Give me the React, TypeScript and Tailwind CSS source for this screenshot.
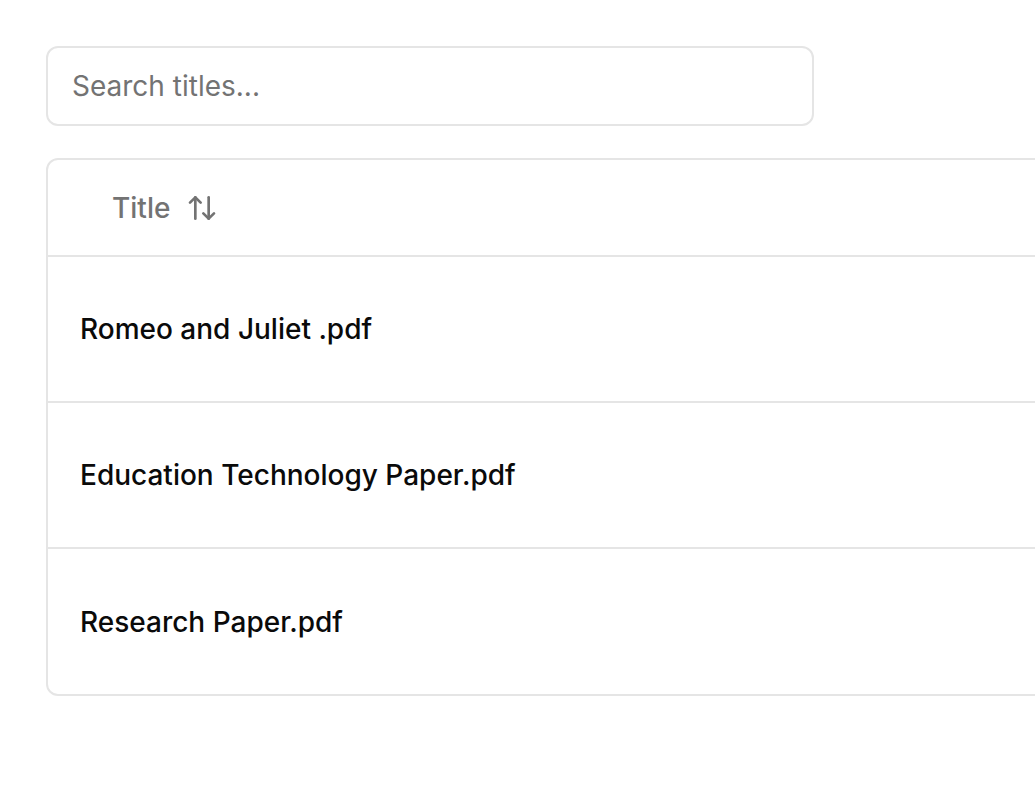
import { ArrowUpDown } from "lucide-react";

const ROWS = ["Romeo and Juliet .pdf", "Education Technology Paper.pdf", "Research Paper.pdf"];

export default function App() {
  return (
    <div
      className="min-h-[812px] w-full overflow-hidden bg-white pt-[46px] pl-[46px]"
      style={{ fontFamily: "Inter, 'Noto Sans', sans-serif" }}
    >
      {/* Search */}
      <div className="w-[768px]">
        <input
          placeholder="Search titles..."
          className="h-[80px] w-full rounded-[12px] border-2 border-[#e5e5e5] bg-white px-[24px] text-[28px] text-[#0a0a0a] outline-none placeholder:text-[#737373]"
        />
      </div>

      {/* Table */}
      <div className="mt-[32px] w-[1100px] rounded-[12px] border-2 border-[#e5e5e5]">
        <div className="flex h-[97px] items-center border-b-2 border-[#e5e5e5] px-[32px]">
          <button className="flex items-center gap-[16px] px-[32px] text-[28px] font-medium text-[#737373]">
            Title
            <ArrowUpDown size={32} strokeWidth={2} />
          </button>
        </div>
        {ROWS.map((title, i) => (
          <div
            key={title}
            className={
              i < ROWS.length - 1
                ? "flex h-[146px] items-center border-b-2 border-[#e5e5e5] px-[32px]"
                : "flex h-[145px] items-center px-[32px]"
            }
          >
            <span className="text-[28px] font-medium text-[#0a0a0a]">{title}</span>
          </div>
        ))}
      </div>
    </div>
  );
}
